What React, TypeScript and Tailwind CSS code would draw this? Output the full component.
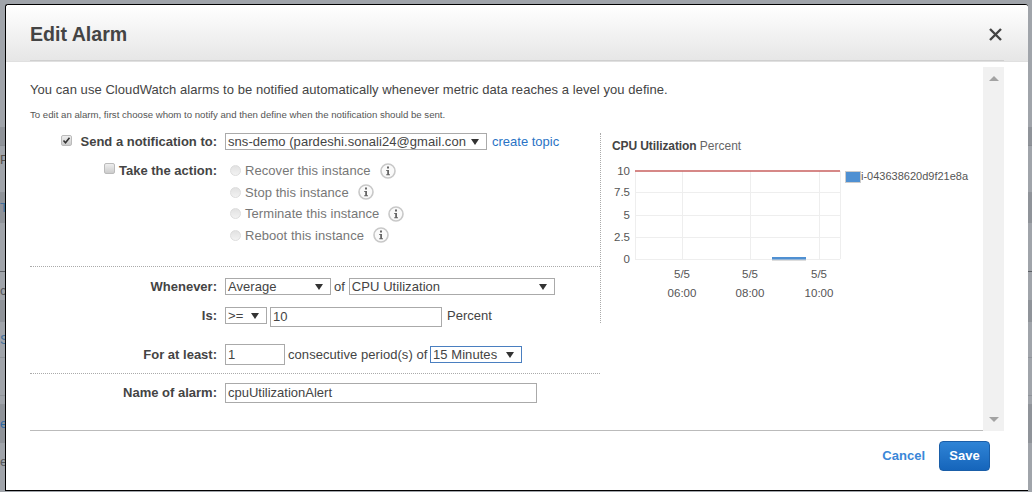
const font = { fontFamily: '"Liberation Sans", Arial, sans-serif' };

function Caret() {
  return (
    <span className="h-0 w-0 shrink-0 border-x-[4px] border-t-[6px] border-x-transparent border-t-[#333]" />
  );
}

function InfoIcon() {
  return (
    <svg width="16" height="16" viewBox="0 0 16 16" className="ml-[9px] shrink-0">
      <circle cx="8" cy="8" r="7" fill="#fafafa" stroke="#c8c8c8" strokeWidth="1.6" />
      <rect x="7" y="3.5" width="2" height="2" fill="#666" />
      <path d="M6.2 7h2.8v4.2h1v1H6.2v-1h1V8h-1z" fill="#666" />
    </svg>
  );
}

function Checkbox({ checked, className }: { checked?: boolean; className: string }) {
  return (
    <span
      className={`flex h-[11px] w-[11px] shrink-0 items-center justify-center rounded-[2px] border border-[#bbb] bg-gradient-to-b from-[#eee] to-[#ccc] ${className}`}
    >
      {checked && (
        <svg width="9" height="9" viewBox="0 0 9 9">
          <path d="M1.5 4.5l2 2.2 4-5" fill="none" stroke="#333" strokeWidth="1.6" />
        </svg>
      )}
    </span>
  );
}

function Select({ text, className }: { text: string; className: string }) {
  return (
    <div
      className={`flex h-[17px] shrink-0 items-center justify-between border pl-[2px] pr-[7px] text-[13px] leading-none text-[#444] ${className}`}
    >
      <span className="whitespace-nowrap tracking-[0.06px]">{text}</span>
      <Caret />
    </div>
  );
}

function Field({ text, className }: { text: string; className: string }) {
  return (
    <div
      className={`flex shrink-0 items-center border border-[#aaa] pl-[2px] text-[13px] text-[#444] ${className}`}
    >
      {text}
    </div>
  );
}

function Label({ text, children }: { text: string; children?: React.ReactNode }) {
  return (
    <span className="flex w-[187px] shrink-0 items-center justify-end text-[13px] font-bold text-[#444]">
      {children}
      {text}
    </span>
  );
}

function ActionOption({ text }: { text: string }) {
  return (
    <div className="flex h-[21.5px] items-center">
      <span className="h-[11px] w-[11px] shrink-0 rounded-full border border-[#ddd] bg-gradient-to-b from-[#e2e2e2] to-[#f2f2f2]" />
      <span className="ml-[4px] text-[13px] tracking-[0.06px] text-[#777]">{text}</span>
      <InfoIcon />
    </div>
  );
}

function Chart() {
  const ys = [192, 215, 237, 259];
  const labels = [
    { y: 171, text: '10' },
    { y: 192, text: '7.5' },
    { y: 215, text: '5' },
    { y: 237, text: '2.5' },
    { y: 259, text: '0' },
  ];
  const xs = [682, 750, 819];
  const times = ['06:00', '08:00', '10:00'];
  return (
    <svg width="375" height="150" viewBox="601 160 375 150" className="mt-[6px] block">
      {ys.map((y) => (
        <line key={y} x1="635" x2="840" y1={y + 0.5} y2={y + 0.5} stroke="#eee" />
      ))}
      <line x1="635.5" x2="635.5" y1="171" y2="259" stroke="#eee" />
      <line x1="840.5" x2="840.5" y1="171" y2="259" stroke="#eee" />
      {xs.map((x) => (
        <line key={x} x1={x + 0.5} x2={x + 0.5} y1="171" y2="259" stroke="#eee" />
      ))}
      <line x1="635" x2="840" y1="171" y2="171" stroke="#c9605f" strokeWidth="1.5" />
      <rect x="772" y="259" width="34" height="2" fill="#ddd" />
      <rect x="772" y="257" width="34" height="2.5" fill="#4f90d2" />
      {labels.map((l) => (
        <text key={l.y} x="630" y={l.y + 4} textAnchor="end" fontSize="11.5" fill="#555">
          {l.text}
        </text>
      ))}
      {xs.map((x, i) => (
        <g key={x}>
          <text x={x} y="278" textAnchor="middle" fontSize="11.5" fill="#555">
            5/5
          </text>
          <text x={x} y="297" textAnchor="middle" fontSize="11.5" fill="#555">
            {times[i]}
          </text>
        </g>
      ))}
      <rect x="845.5" y="171.5" width="15" height="11" fill="#4f90d2" stroke="#ccc" />
      <text x="861" y="180" fontSize="11" fill="#555">
        i-043638620d9f21e8a
      </text>
    </svg>
  );
}

function BackdropStrip({ letters, className }: { letters?: boolean; className: string }) {
  return (
    <div className={`flex h-[492px] shrink-0 flex-col overflow-hidden text-[13px] leading-[20px] ${className}`}>
      <div className="h-[127px] shrink-0" />
      <div className="h-[19px] shrink-0 border-b border-[#888c92] bg-[#8f9399]" />
      <div className="h-[47px] shrink-0 border-b border-[#90949a] pt-[4px] text-[#55504c]">{letters && 'P'}</div>
      <div className="h-[30px] shrink-0 bg-[#8f9399] pt-[5px] text-[#3f6f9c]">{letters && 'T'}</div>
      <div className="h-[49px] shrink-0 border-b border-[#5c5f64]" />
      <div className="h-[28px] shrink-0 pt-[9px] text-[#55585c]">{letters && 'c'}</div>
      <div className="h-[22px] shrink-0 bg-[#8f9399]" />
      <div className="h-[36px] shrink-0 border-b border-[#90949a] pt-[8px] text-[#3f6f9c]">{letters && 'S'}</div>
      <div className="h-[38px] shrink-0 border-b border-[#90949a]" />
      <div className="h-[9px] shrink-0 border-b border-[#90949a]" />
      <div className="h-[38px] shrink-0 bg-[#8f9399] pt-[9px] text-[#2f6aa5]">{letters && 'e'}</div>
      <div className="flex-1 pt-[9px] text-[#55585c]">{letters && 'e'}</div>
    </div>
  );
}

export default function App() {
  return (
    <div style={font} className="flex h-[492px] w-[1032px] overflow-hidden bg-[#a0a4aa]">
      <BackdropStrip letters className="w-[5px]" />
      <div className="min-w-0 flex-1 pt-[4px]">
        <div className="flex h-[487px] flex-col rounded-t-[3px] border-b border-l border-t border-black bg-white">
          <div className="h-[57px] shrink-0 rounded-t-[3px] border-b border-[#e0e0e0] bg-gradient-to-b from-white to-[#e6e6e6] px-[24px]">
            <div className="flex h-[56px] items-center justify-between border-b border-[#cfcfcf] pt-[4px]">
              <span className="text-[19.6px] font-bold text-[#444]">Edit Alarm</span>
              <svg width="13" height="13" viewBox="0 0 13 13" className="mr-[2px]">
                <path d="M1 1l11 11M12 1L1 12" stroke="#444" strokeWidth="2.4" />
              </svg>
            </div>
          </div>

          <div className="flex min-h-0 flex-1 pl-[24px] pr-[24px]">
            <div className="flex min-w-0 flex-1 flex-col border-b border-[#bbb]">
              <p className="mt-[18px] whitespace-nowrap text-[13px] leading-[20px] tracking-[0.06px] text-[#444]">
                You can use CloudWatch alarms to be notified automatically whenever metric data reaches a level you define.
              </p>
              <p className="mt-[8px] whitespace-nowrap text-[9.65px] leading-[14px] text-[#555]">
                To edit an alarm, first choose whom to notify and then define when the notification should be sent.
              </p>
              <div className="flex flex-1">
                <div className="w-[570px] shrink-0">
                  <div className="mt-[11px] flex h-[17px] items-center">
                    <Label text="Send a notification to:">
                      <Checkbox checked className="mb-[2px] mr-[9px]" />
                    </Label>
                    <Select
                      text="sns-demo (pardeshi.sonali24@gmail.con"
                      className="ml-[8px] w-[262px] border-[#aaa]"
                    />
                    <span className="ml-[5px] text-[13px] text-[#2a73c5]">create topic</span>
                  </div>
                  <div className="mt-[10px] flex border-b border-dotted border-[#aaa] pb-[20px]">
                    <div className="flex h-[21.5px] items-center">
                      <Label text="Take the action:">
                        <Checkbox className="mb-[5px] mr-[4px]" />
                      </Label>
                    </div>
                    <div className="ml-[13px] flex flex-col">
                      <ActionOption text="Recover this instance" />
                      <ActionOption text="Stop this instance" />
                      <ActionOption text="Terminate this instance" />
                      <ActionOption text="Reboot this instance" />
                    </div>
                  </div>
                  <div className="mt-[11px] flex h-[17px] items-center">
                    <Label text="Whenever:" />
                    <Select text="Average" className="ml-[8px] w-[106px] border-[#aaa]" />
                    <span className="ml-[3px] text-[13px] text-[#444]">of</span>
                    <Select text="CPU Utilization" className="ml-[4px] w-[206px] border-[#aaa]" />
                  </div>
                  <div className="mt-[12px] flex h-[20px] items-start">
                    <div className="flex h-[17px] items-center">
                      <Label text="Is:" />
                    </div>
                    <Select text=">=" className="ml-[8px] w-[42px] border-[#aaa]" />
                    <Field text="10" className="ml-[3px] h-[20px] w-[172px]" />
                    <span className="ml-[5px] text-[13px] leading-[18px] text-[#444]">Percent</span>
                  </div>
                  <div className="mt-[17px] flex h-[21px] items-center">
                    <Label text="For at least:" />
                    <Field text="1" className="ml-[8px] h-[21px] w-[60px]" />
                    <span className="ml-[3px] whitespace-nowrap text-[13px] tracking-[0.06px] text-[#444]">
                      consecutive period(s) of
                    </span>
                    <Select text="15 Minutes" className="ml-auto mr-[78px] w-[92px] border-[#4a7fc0]" />
                  </div>
                  <div className="mt-[8px] flex border-t border-dotted border-[#aaa] pt-[9px]">
                    <div className="flex h-[20px] items-center">
                      <Label text="Name of alarm:" />
                    </div>
                    <Field text="cpuUtilizationAlert" className="ml-[8px] h-[20px] w-[312px]" />
                  </div>
                </div>
                <div className="mt-[11px] h-[190px] flex-1 self-start border-l border-dotted border-[#aaa]">
                  <div className="ml-[11px] mt-[5px] whitespace-nowrap text-[12px] leading-[16px] text-[#666]">
                    <span className="font-bold tracking-[-0.1px] text-[#444]">CPU Utilization</span> Percent
                  </div>
                  <Chart />
                </div>
              </div>
            </div>
            <div className="mt-[5px] flex w-[21px] shrink-0 flex-col items-center justify-between bg-[#f1f1f1] py-[9px]">
              <span className="h-0 w-0 border-x-[5px] border-b-[5px] border-x-transparent border-b-[#a3a3a3]" />
              <span className="h-0 w-0 border-x-[5px] border-t-[5px] border-x-transparent border-t-[#a3a3a3]" />
            </div>
          </div>

          <div className="flex h-[59px] shrink-0 items-start justify-end pr-[38px] pt-[10px]">
            <span className="mt-[6px] text-[13px] font-bold leading-[18px] text-[#3a87d8]">Cancel</span>
            <span className="ml-[14px] flex h-[30px] w-[51px] items-center justify-center rounded-[4px] border border-[#1a5ea8] bg-gradient-to-b from-[#2f84d6] to-[#1565bb] text-[13px] font-bold text-white">
              Save
            </span>
          </div>
        </div>
      </div>
      <BackdropStrip className="w-[4px]" />
    </div>
  );
}
